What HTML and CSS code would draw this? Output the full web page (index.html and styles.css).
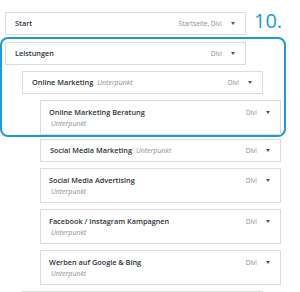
FILE: index.html
```html
<!DOCTYPE html>
<html lang="de">
<head>
<meta charset="utf-8">
<title>Menüstruktur</title>
<link rel="stylesheet" href="styles.css">
</head>
<body>
<div class="page">
  <div class="top-row">
    <div class="item single lvl0">
      <div class="row"><span class="title">Start</span><span class="meta">Startseite, Divi</span><i class="arrow"></i></div>
    </div>
    <div class="step">10.</div>
  </div>

  <div class="highlight">
    <div class="item single lvl0">
      <div class="row"><span class="title">Leistungen</span><span class="meta">Divi</span><i class="arrow"></i></div>
    </div>
    <div class="item single lvl1">
      <div class="row"><span class="title">Online Marketing</span><span class="sub">Unterpunkt</span><span class="meta">Divi</span><i class="arrow"></i></div>
    </div>
    <div class="item double lvl2">
      <div class="row"><span class="title">Online Marketing Beratung</span><span class="meta">Divi</span><i class="arrow"></i></div>
      <div class="sub-line">Unterpunkt</div>
    </div>
  </div>

  <div class="list">
    <div class="item single lvl2">
      <div class="row"><span class="title">Social Media Marketing</span><span class="sub">Unterpunkt</span><span class="meta">Divi</span><i class="arrow"></i></div>
    </div>
    <div class="item double lvl2">
      <div class="row"><span class="title">Social Media Advertising</span><span class="meta">Divi</span><i class="arrow"></i></div>
      <div class="sub-line">Unterpunkt</div>
    </div>
    <div class="item double lvl2">
      <div class="row"><span class="title">Facebook / Instagram Kampagnen</span><span class="meta">Divi</span><i class="arrow"></i></div>
      <div class="sub-line">Unterpunkt</div>
    </div>
    <div class="item double lvl2">
      <div class="row"><span class="title">Werben auf Google &amp; Bing</span><span class="meta">Divi</span><i class="arrow"></i></div>
      <div class="sub-line">Unterpunkt</div>
    </div>
    <div class="item single lvl1"></div>
  </div>
</div>
</body>
</html>
```

FILE: styles.css
```css
html, body {
  margin: 0;
  padding: 0;
  background: #ffffff;
}

body {
  font-family: "Open Sans", "Noto Sans", "Liberation Sans", sans-serif;
  color: #2c3338;
  overflow: hidden;
}

.page {
  padding-top: 12px;
}

.top-row {
  display: flex;
  align-items: flex-start;
}

.step {
  margin-left: 8px;
  margin-top: -1px;
  font-size: 20px;
  line-height: 20px;
  color: #1b9bd7;
  font-weight: 400;
}

.highlight {
  width: 286px;
  box-sizing: border-box;
  margin-top: 2px;
  border: 2px solid #1b9bd7;
  border-radius: 8px;
  padding: 3px 0 0 0;
  display: flex;
  flex-direction: column;
  gap: 6px;
}

.highlight .lvl0 { margin-left: 3px; }
.highlight .lvl1 { margin-left: 20px; }
.highlight .lvl2 { margin-left: 38px; }

.list {
  margin-top: 2px;
  display: flex;
  flex-direction: column;
  gap: 6px;
}

.list .lvl0, .top-row .lvl0 { margin-left: 5px; }
.list .lvl1 { margin-left: 22px; }
.list .lvl2 { margin-left: 40px; }

.item {
  width: 241px;
  flex: none;
  box-sizing: border-box;
  border: 1px solid #dcdcde;
  background: #ffffff;
  display: flex;
  flex-direction: column;
}

.item.single {
  height: 23px;
  justify-content: center;
  padding: 0 9px 0 9px;
}

.item.double {
  height: 35px;
  padding: 6px 9px 5px 8px;
}

.row {
  display: flex;
  align-items: center;
  height: 11px;
}

.title {
  font-size: 7.3px;
  font-weight: 600;
  color: #2c3338;
  white-space: nowrap;
  line-height: 11px;
}

.sub {
  margin-left: 4px;
  font-size: 7px;
  font-style: italic;
  color: #8c8f94;
  line-height: 11px;
  white-space: nowrap;
}

.sub-line {
  margin-left: 2px;
  font-size: 7px;
  font-style: italic;
  color: #8c8f94;
  line-height: 11px;
  height: 11px;
}

.meta {
  margin-left: auto;
  font-size: 6.5px;
  color: #8c8f94;
  white-space: nowrap;
  line-height: 11px;
}

.arrow {
  display: block;
  margin-left: 9px;
  margin-right: 1px;
  width: 0;
  height: 0;
  border-left: 2.5px solid transparent;
  border-right: 2.5px solid transparent;
  border-top: 3.5px solid #50575e;
}
```
